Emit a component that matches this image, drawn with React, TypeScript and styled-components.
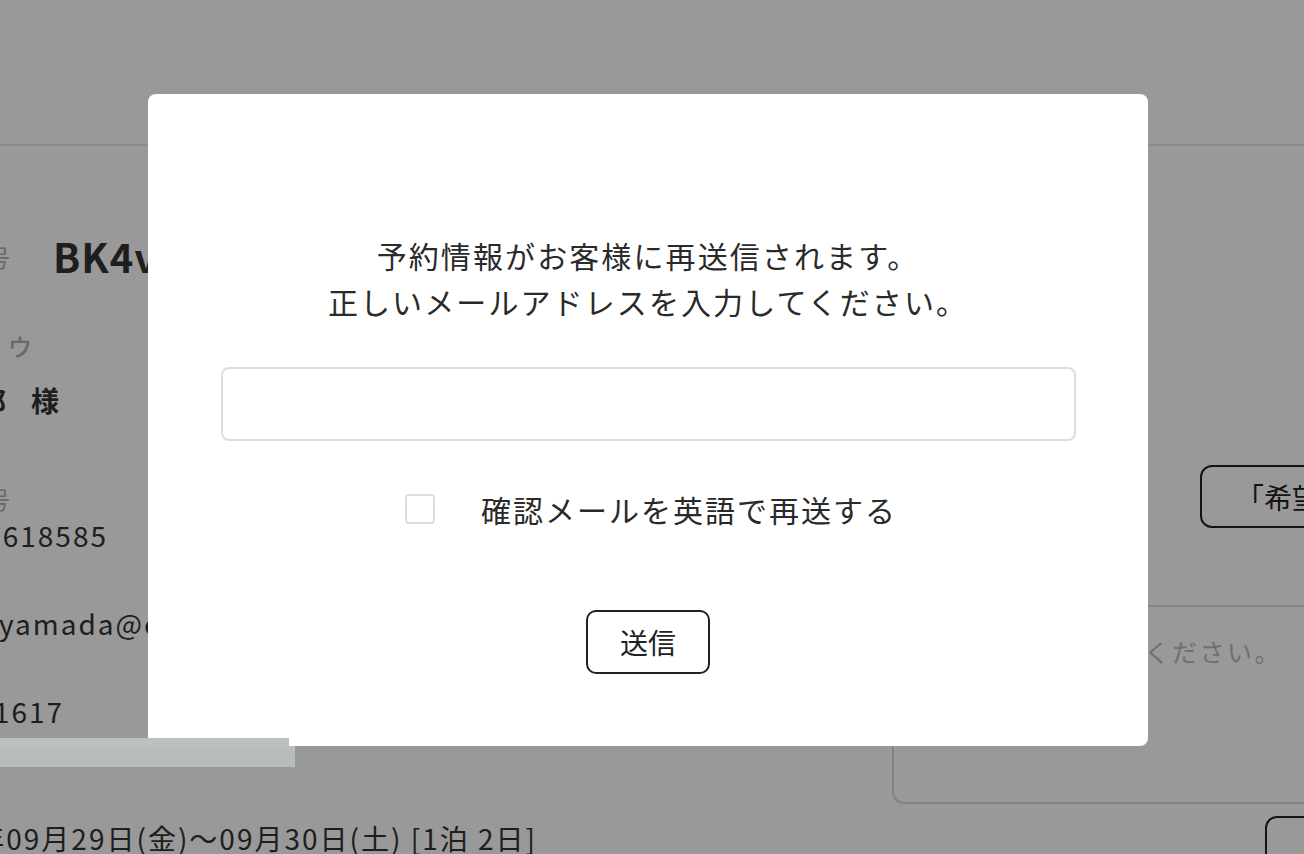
import React from "react";
import styled, { createGlobalStyle } from "styled-components";

const Global = createGlobalStyle`
  html, body { margin: 0; padding: 0; background: #fff; overflow: hidden; }
  body { font-family: "Noto Sans CJK JP", "Noto Sans", sans-serif; color: #333; }
  * { box-sizing: border-box; }
`;

const Page = styled.div`
  width: 1304px;
  height: 854px;
  overflow: hidden;
  display: flex;
  flex-direction: column;
`;

const Header = styled.header`
  height: 146px;
  flex: none;
  border-bottom: 2px solid #e8e8e8;
`;

const Main = styled.main`
  display: flex;
  flex: 1;
`;

const LeftCol = styled.section`
  width: 892px;
  flex: none;
  display: flex;
  flex-direction: column;
`;

const RightCol = styled.section`
  width: 600px;
  flex: none;
  display: flex;
  flex-direction: column;
  align-items: flex-start;
`;

const Row = styled.div<{ $top: number; $h: number }>`
  margin-top: ${(p) => p.$top}px;
  height: ${(p) => p.$h}px;
  display: flex;
  align-items: center;
  white-space: nowrap;
`;

const Label = styled.span<{ $w: number }>`
  margin-left: -86px;
  width: ${(p) => p.$w}px;
  flex: none;
  font-size: 24px;
  color: #b0b0b0;
`;

const EndBox = styled.div<{ $w: number }>`
  width: ${(p) => p.$w}px;
  flex: none;
  display: flex;
  justify-content: flex-end;
  white-space: nowrap;
`;

const Code = styled.span`
  font-size: 40px;
  font-weight: 700;
  color: #333;
  letter-spacing: 1px;
`;

const Kana = styled.span`
  font-size: 24px;
  font-weight: 500;
  letter-spacing: 7px;
  color: #b0b0b0;
`;

const NameText = styled.span`
  font-size: 27px;
  font-weight: 700;
  color: #333;
`;

const Honorific = styled.span`
  margin-left: 25px;
  font-size: 28px;
  font-weight: 700;
  color: #333;
`;

const Value = styled.span<{ $shift?: number }>`
  margin-left: ${(p) => p.$shift ?? 0}px;
  font-size: 28px;
  letter-spacing: 2px;
  color: #333;
`;

const Strip = styled.div`
  position: relative;
  z-index: 20;
  margin-top: 9px;
  display: flex;
  flex-direction: column;
`;

const StripTop = styled.div`
  width: 289px;
  height: 8px;
  background: #bac1be;
`;

const StripBody = styled.div`
  width: 295px;
  height: 21px;
  background: #b6bdba;
`;

const OutlineButton = styled.div<{ $top: number; $left: number; $h: number }>`
  margin-top: ${(p) => p.$top}px;
  margin-left: ${(p) => p.$left}px;
  height: ${(p) => p.$h}px;
  width: 320px;
  border: 2px solid #222;
  border-radius: 12px;
  display: flex;
  align-items: center;
  padding-left: 34px;
  font-size: 28px;
  color: #222;
  white-space: nowrap;
`;

const NoteBox = styled.div`
  margin-top: 77px;
  width: 520px;
  height: 199px;
  border: 2px solid #dadada;
  border-radius: 12px;
  padding: 27px 0 0 32px;
  font-size: 25px;
  letter-spacing: 2.5px;
  line-height: 34px;
  color: #b3bcc8;
  white-space: nowrap;
`;

const Overlay = styled.div`
  position: fixed;
  inset: 0;
  z-index: 10;
  background: rgba(0, 0, 0, 0.4);
  display: flex;
  align-items: flex-start;
  justify-content: flex-start;
  padding: 94px 0 0 148px;
`;

const Modal = styled.div`
  width: 1000px;
  height: 652px;
  background: #fff;
  border-radius: 8px;
  padding-top: 138px;
  display: flex;
  flex-direction: column;
  align-items: center;
`;

const Message = styled.p`
  margin: 0;
  font-size: 30px;
  line-height: 46px;
  letter-spacing: 2.1px;
  color: #2a2a2a;
  text-align: center;
`;

const EmailInput = styled.input`
  margin-top: 43px;
  width: 855px;
  height: 74px;
  border: 2px solid #dddddd;
  border-radius: 8px;
  padding: 0 20px;
  font-size: 24px;
  font-family: inherit;
  outline: none;
  background: #fff;
`;

const CheckRow = styled.label`
  margin-top: 52px;
  height: 32px;
  padding-left: 6px;
  display: flex;
  align-items: center;
  gap: 46px;
`;

const CheckBox = styled.span`
  width: 30px;
  height: 30px;
  border: 2px solid #dddddd;
  border-radius: 4px;
  background: #fff;
`;

const CheckText = styled.span`
  font-size: 30px;
  letter-spacing: 2px;
  color: #2a2a2a;
`;

const SendButton = styled.button`
  margin-top: 85px;
  width: 124px;
  height: 64px;
  border: 2px solid #222;
  border-radius: 10px;
  background: #fff;
  font-family: inherit;
  font-size: 28px;
  color: #222;
  padding: 0;
  cursor: pointer;
`;

export default function App() {
  return (
    <>
      <Global />
      <Page>
        <Header />
        <Main>
          <LeftCol>
            <Row $top={80} $h={60}>
              <Label $w={139}>予約番号</Label>
              <Code>BK4vR8JQ</Code>
            </Row>
            <Row $top={44} $h={30}>
              <EndBox $w={39}>
                <Kana>ヤマダ タロウ</Kana>
              </EndBox>
            </Row>
            <Row $top={23} $h={34}>
              <EndBox $w={6}>
                <NameText>山田 太郎</NameText>
              </EndBox>
              <Honorific>様</Honorific>
            </Row>
            <Row $top={66} $h={30}>
              <Label $w={120}>電話番号</Label>
            </Row>
            <Row $top={4} $h={36}>
              <EndBox $w={108}>
                <Value>0901618585</Value>
              </EndBox>
            </Row>
            <Row $top={52} $h={36}>
              <Value $shift={-1}>yamada@cloudtech.jp</Value>
            </Row>
            <Row $top={52} $h={36}>
              <EndBox $w={64}>
                <Value>0601617</Value>
              </EndBox>
            </Row>
            <Strip>
              <StripTop />
              <StripBody />
            </Strip>
            <Row $top={53} $h={36}>
              <EndBox $w={537}>
                <Value>2023年09月29日(金)〜09月30日(土) [1泊 2日]</Value>
              </EndBox>
            </Row>
          </LeftCol>
          <RightCol>
            <OutlineButton $top={319} $left={308} $h={63}>
              「希望日を変更」
            </OutlineButton>
            <NoteBox>ご要望を入力してください。</NoteBox>
            <OutlineButton $top={12} $left={373} $h={60} />
          </RightCol>
        </Main>
      </Page>
      <Overlay>
        <Modal role="dialog">
          <Message>
            予約情報がお客様に再送信されます。
            <br />
            正しいメールアドレスを入力してください。
          </Message>
          <EmailInput type="email" aria-label="メールアドレス" />
          <CheckRow>
            <CheckBox />
            <CheckText>確認メールを英語で再送する</CheckText>
          </CheckRow>
          <SendButton type="button">送信</SendButton>
        </Modal>
      </Overlay>
    </>
  );
}
